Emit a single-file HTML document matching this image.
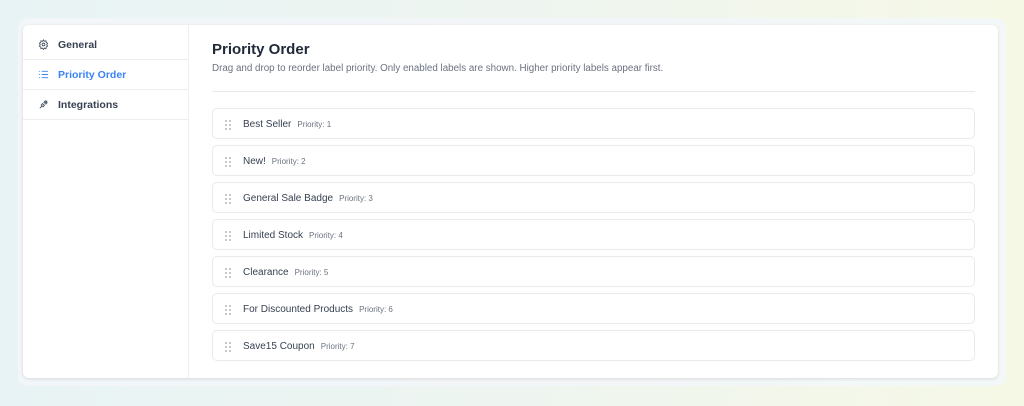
<!DOCTYPE html>
<html><head><style>
*{box-sizing:border-box;margin:0;padding:0}
body{width:1024px;height:406px;overflow:hidden;font-family:"Liberation Sans",sans-serif;background:linear-gradient(90deg,#e8f3f5 0%,#eef5f0 50%,#f6f8e6 100%);position:relative}
.outer{position:absolute;left:18px;top:18px;width:988px;height:368px;border-radius:10px;background:rgba(243,246,248,.9)}
.card{position:absolute;left:23px;top:25px;width:975px;height:353px;background:#fff;border-radius:6px;box-shadow:0 1px 3px rgba(0,0,0,.12)}
.side{position:absolute;left:0;top:0;width:166px;height:100%;border-right:1px solid #eceef1;padding-top:5px}
.nav{height:30px;border-bottom:1px solid #eceef1;display:flex;align-items:center;padding-left:15px;font-size:10.5px;font-weight:bold;color:#374151}
.nav svg{margin-right:9px}
.nav.act{color:#3b82f6}
.main{position:absolute;left:189px;top:0}
h1{position:absolute;left:0;top:16px;font-size:15px;font-weight:bold;color:#1f2937;white-space:nowrap}
.sub{position:absolute;left:0;top:38px;font-size:9.8px;color:#6b7280;white-space:nowrap}
.hr{position:absolute;left:0;top:66px;width:763px;height:1px;background:#e5e7eb}
.item{position:absolute;left:0;width:763px;height:31px;border:1px solid #e8eaed;border-radius:5px;display:flex;align-items:center;padding-left:11px;padding-top:2px;font-size:10px;color:#374151;white-space:nowrap}
.dots{width:8px;height:12px;margin-right:11px;background-image:radial-gradient(circle,#b5b9bf 0.8px,transparent 1.1px);background-size:4px 4px}
.p{font-size:8px;color:#6b7280;margin-left:6px}
</style></head><body>
<div class="outer"></div>
<div class="card">
<div class="side">
<div class="nav"><svg width="11" height="11" viewBox="0 0 24 24" fill="none" stroke="#4b5563" stroke-width="2"><circle cx="12" cy="12" r="3"/><path d="M12 2l2 3 3.5-1 .5 3.5 3 2-2 3 2 3-3 2-.5 3.5-3.5-1-2 3-2-3-3.5 1-.5-3.5-3-2 2-3-2-3 3-2 .5-3.5 3.5 1z"/></svg>General</div>
<div class="nav act"><svg width="11" height="11" viewBox="0 0 24 24" fill="none" stroke="#3b82f6" stroke-width="2"><path d="M8 5h14M8 12h14M8 19h14M2 5h2M2 12h2M2 19h2"/></svg>Priority Order</div>
<div class="nav"><svg width="11" height="11" viewBox="0 0 24 24" fill="none" stroke="#4b5563" stroke-width="2"><path d="M4 20l5-5M15 9l5-5M7 13l4 4 3-3-4-4zM13 7l4 4 3-3-4-4z"/></svg>Integrations</div>
</div>
<div class="main">
<h1>Priority Order</h1>
<div class="sub">Drag and drop to reorder label priority. Only enabled labels are shown. Higher priority labels appear first.</div>
<div class="hr"></div>
<div class="item" style="top:83px"><span class="dots"></span>Best Seller<span class="p">Priority: 1</span></div>
<div class="item" style="top:120px"><span class="dots"></span>New!<span class="p">Priority: 2</span></div>
<div class="item" style="top:157px"><span class="dots"></span>General Sale Badge<span class="p">Priority: 3</span></div>
<div class="item" style="top:194px"><span class="dots"></span>Limited Stock<span class="p">Priority: 4</span></div>
<div class="item" style="top:231px"><span class="dots"></span>Clearance<span class="p">Priority: 5</span></div>
<div class="item" style="top:268px"><span class="dots"></span>For Discounted Products<span class="p">Priority: 6</span></div>
<div class="item" style="top:305px"><span class="dots"></span>Save15 Coupon<span class="p">Priority: 7</span></div>
</div>
</div>
</body></html>
